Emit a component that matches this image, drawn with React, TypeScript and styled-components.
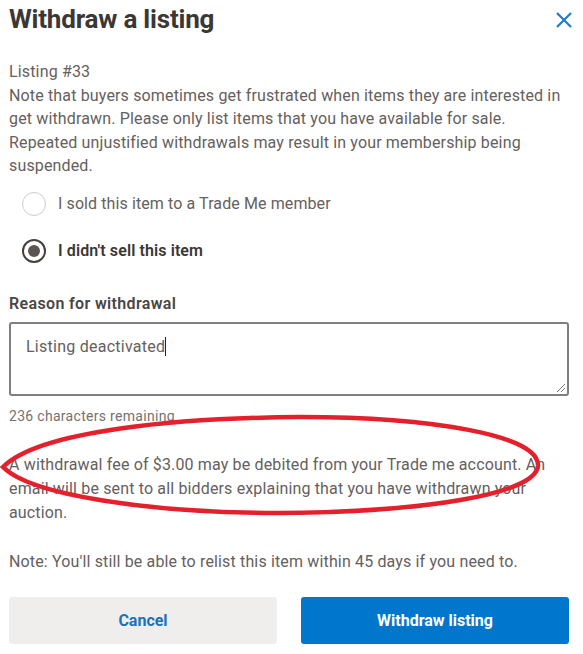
import React from "react";
import styled, { createGlobalStyle } from "styled-components";

const Global = createGlobalStyle`
  html, body { margin: 0; padding: 0; background: #fff; }
  body { font-family: Roboto, "Liberation Sans", sans-serif; color: #65605d; }
  * { box-sizing: border-box; }
`;

const Dialog = styled.div`
  position: relative;
  width: 583px;
  height: 654px;
  padding: 0 14px 0 9px;
  display: flex;
  flex-direction: column;
`;

const Header = styled.div`
  display: flex;
  align-items: center;
  justify-content: space-between;
  height: 38px;
`;

const Title = styled.h1`
  margin: 0;
  font-size: 26px;
  font-weight: 700;
  color: #3a3735;
  letter-spacing: -0.2px;
`;

const Close = styled.button`
  border: none;
  background: none;
  padding: 0;
  margin-right: -5px;
  margin-top: 2px;
  display: flex;
  cursor: pointer;
`;

const Body = styled.div`
  margin-top: 22px;
  font-size: 16px;
  line-height: 23.5px;
  letter-spacing: 0.15px;
  white-space: nowrap;
`;

const Text = styled.p`
  margin: 0;
`;

const RadioGroup = styled.div`
  display: flex;
  flex-direction: column;
  gap: 23px;
  margin: 14px 0 0 13px;
`;

const RadioRow = styled.label<{ $checked?: boolean }>`
  display: flex;
  align-items: center;
  gap: 12px;
  font-size: 16px;
  letter-spacing: 0.1px;
  font-weight: ${(p) => (p.$checked ? 600 : 400)};
  color: ${(p) => (p.$checked ? "#3a3735" : "#65605d")};
  height: 24px;
`;

const RadioCircle = styled.span<{ $checked?: boolean }>`
  width: 24px;
  height: 24px;
  border-radius: 50%;
  border: ${(p) => (p.$checked ? "2px solid #44403d" : "1px solid #cfcbc8")};
  display: flex;
  align-items: center;
  justify-content: center;
  &::after {
    content: "";
    display: ${(p) => (p.$checked ? "block" : "none")};
    width: 12px;
    height: 12px;
    border-radius: 50%;
    background: #5a5553;
  }
`;

const FieldLabel = styled.div`
  margin-top: 31px;
  font-size: 16px;
  font-weight: 600;
  letter-spacing: 0.35px;
  color: #4a4644;
`;

const TextArea = styled.div`
  margin-top: 9px;
  height: 74px;
  border: 2px solid #7f7f7f;
  border-radius: 3px;
  padding: 13px 15px;
  font-size: 16px;
  letter-spacing: 0.25px;
  color: #65605d;
  position: relative;
`;

const Caret = styled.span`
  display: inline-block;
  width: 1px;
  height: 19px;
  background: #222;
  vertical-align: -4px;
`;

const Grip = styled.svg`
  position: absolute;
  right: 1px;
  bottom: 1px;
`;

const Hint = styled.div`
  margin-top: 12px;
  font-size: 14px;
  letter-spacing: 0.3px;
  color: #76716e;
`;

const Para = styled.p<{ $gap: number }>`
  margin: ${(p) => p.$gap}px 0 0;
  font-size: 16px;
  line-height: 24px;
  letter-spacing: 0.15px;
  white-space: nowrap;
`;

const Buttons = styled.div`
  display: grid;
  grid-template-columns: 1fr 1fr;
  gap: 24px;
  margin-top: 23px;
`;

const Button = styled.button<{ $primary?: boolean }>`
  height: 47px;
  border: none;
  border-radius: 3px;
  font-family: inherit;
  font-size: 16px;
  font-weight: 700;
  background: ${(p) => (p.$primary ? "#0077cc" : "#efeeec")};
  color: ${(p) => (p.$primary ? "#fff" : "#1a73b8")};
`;

const Annotation = styled.svg`
  position: absolute;
  left: 0;
  top: 0;
  pointer-events: none;
`;

export default function App() {
  return (
    <>
      <Global />
      <Dialog>
        <Header>
          <Title>Withdraw a listing</Title>
          <Close aria-label="Close">
            <svg width="20" height="20" viewBox="0 0 20 20">
              <path d="M3 3 L17 17 M17 3 L3 17" stroke="#1f7acb" strokeWidth="2.2" fill="none" />
            </svg>
          </Close>
        </Header>
        <Body>
          <Text>Listing #33</Text>
          <Text>
            Note that buyers sometimes get frustrated when items they are interested in
            <br />
            get withdrawn. Please only list items that you have available for sale.
            <br />
            Repeated unjustified withdrawals may result in your membership being
            <br />
            suspended.
          </Text>
        </Body>
        <RadioGroup>
          <RadioRow>
            <RadioCircle />I sold this item to a Trade Me member
          </RadioRow>
          <RadioRow $checked>
            <RadioCircle $checked />I didn't sell this item
          </RadioRow>
        </RadioGroup>
        <FieldLabel>Reason for withdrawal</FieldLabel>
        <TextArea>
          Listing deactivated
          <Caret />
          <Grip width="12" height="12" viewBox="0 0 12 12">
            <path d="M11 3 L3 11 M11 7 L7 11" stroke="#777" strokeWidth="1" />
          </Grip>
        </TextArea>
        <Hint>236 characters remaining</Hint>
        <Para $gap={29}>
          A withdrawal fee of $3.00 may be debited from your Trade me account. An
          <br />
          email will be sent to all bidders explaining that you have withdrawn your
          <br />
          auction.
        </Para>
        <Para $gap={25}>Note: You'll still be able to relist this item within 45 days if you need to.</Para>
        <Buttons>
          <Button>Cancel</Button>
          <Button $primary>Withdraw listing</Button>
        </Buttons>
        <Annotation width="583" height="654" viewBox="0 0 583 654">
          <path
            d="M3 467 C 40 430 180 418 300 417 C 430 417 540 435 538 466 C 535 495 420 512 280 513 C 150 513 30 495 3 467 Z"
            fill="none"
            stroke="#e3202b"
            strokeWidth="4.5"
          />
        </Annotation>
      </Dialog>
    </>
  );
}
